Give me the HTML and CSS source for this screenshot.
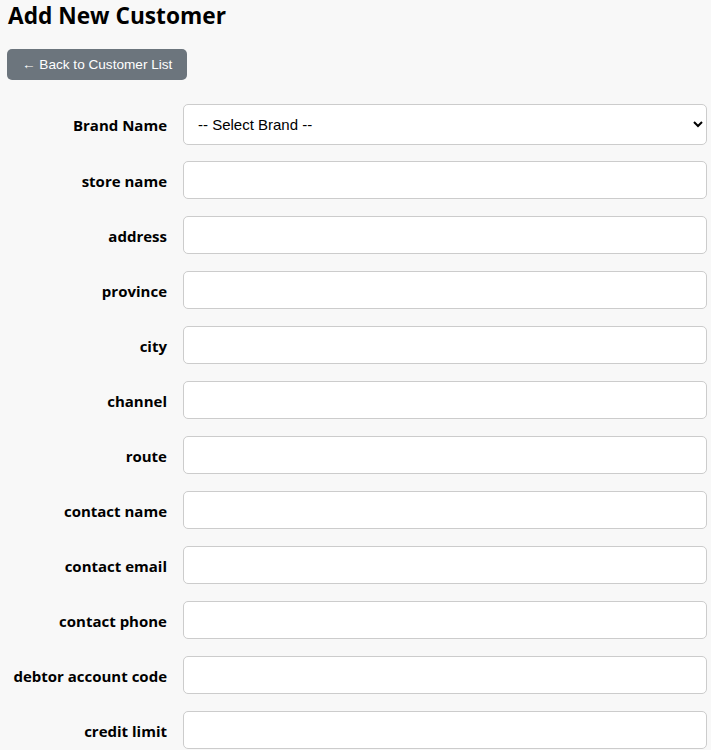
FILE: index.html
```html
<!DOCTYPE html>
<html lang="en">
<head>
    <meta charset="UTF-8">
    <meta name="viewport" content="width=device-width, initial-scale=1.0">
    <title>Add New Customer</title>
    <link rel="stylesheet" href="styles.css">
</head>
<body>
    <h2 class="page-title">Add New Customer</h2>

    <button class="back-button" type="button">&larr; Back to Customer List</button>

    <form class="customer-form">
        <label for="brand">Brand Name</label>
        <select id="brand" class="form-select">
            <option>-- Select Brand --</option>
        </select>

        <label for="storeName">store name</label>
        <input type="text" id="storeName" class="form-input">

        <label for="address">address</label>
        <input type="text" id="address" class="form-input">

        <label for="province">province</label>
        <input type="text" id="province" class="form-input">

        <label for="city">city</label>
        <input type="text" id="city" class="form-input">

        <label for="channel">channel</label>
        <input type="text" id="channel" class="form-input">

        <label for="route">route</label>
        <input type="text" id="route" class="form-input">

        <label for="contactName">contact name</label>
        <input type="text" id="contactName" class="form-input">

        <label for="contactEmail">contact email</label>
        <input type="email" id="contactEmail" class="form-input">

        <label for="contactPhone">contact phone</label>
        <input type="text" id="contactPhone" class="form-input">

        <label for="debtorCode">debtor account code</label>
        <input type="text" id="debtorCode" class="form-input">

        <label for="creditLimit">credit limit</label>
        <input type="text" id="creditLimit" class="form-input">
    </form>
</body>
</html>
```

FILE: styles.css
```css
* {
    box-sizing: border-box;
}

body {
    margin: 0;
    padding: 0 4px 0 8px;
    background: #f8f8f8;
    font-family: 'Open Sans', 'Noto Sans', sans-serif;
    color: #000;
}

.page-title {
    margin: 0 0 17px 0;
    font-size: 22.7px;
    line-height: 32px;
    font-weight: 700;
}

.back-button {
    display: block;
    margin: 0 0 24px -1px;
    height: 31px;
    padding: 0 15px;
    background: #6c757d;
    color: white;
    border: none;
    border-radius: 5px;
    font-family: 'Liberation Sans', Arial, sans-serif;
    font-size: 13.6px;
    cursor: pointer;
}

.customer-form {
    display: grid;
    grid-template-columns: 159px 1fr;
    column-gap: 16px;
    row-gap: 17px;
    align-items: center;
}

.customer-form label {
    text-align: right;
    font-weight: 700;
    font-size: 15px;
    line-height: 20px;
    padding-top: 2px;
    white-space: nowrap;
}

.form-input,
.form-select {
    width: 100%;
    height: 38px;
    padding: 0 14px;
    background: white;
    border: 1px solid #cccccc;
    border-radius: 5px;
    font-family: 'Liberation Sans', Arial, sans-serif;
    font-size: 15px;
    outline: none;
}

.form-select {
    height: 41px;
    margin-bottom: -1px;
    padding: 0 10px;
    color: #000;
}
```
